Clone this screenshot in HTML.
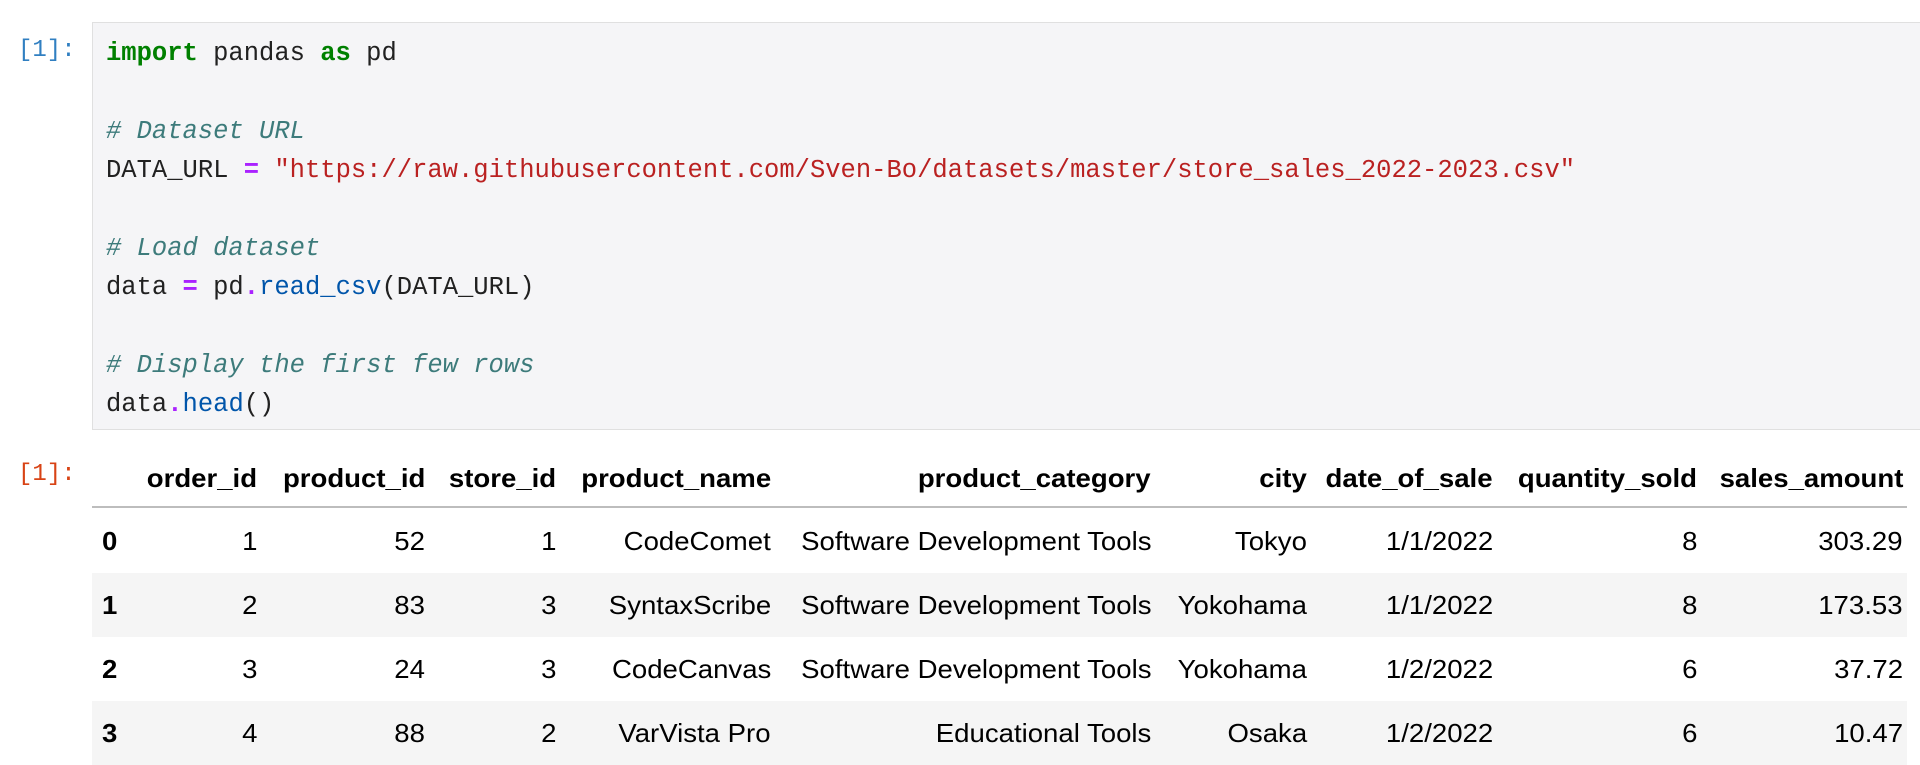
<!DOCTYPE html>
<html><head><meta charset="utf-8"><style>
body{margin:0;width:1920px;height:730px;background:#fff;overflow:hidden;position:relative;font-family:"Liberation Sans",sans-serif}
.prompt{position:absolute;font-family:"Liberation Mono",monospace;font-size:24px;}
.cell{position:absolute;left:92px;top:22px;width:1840px;height:408px;background:#f5f5f7;border:1px solid #e0e0e0;box-sizing:border-box}
.code{position:absolute;left:106px;top:34px;font-family:"Liberation Mono",monospace;font-size:25.5px;line-height:39px;white-space:pre;color:#212121;margin:0}
.k{color:#008000;font-weight:bold}.o{color:#aa22ff;font-weight:bold}.s{color:#ba2121}.c{color:#3d7b7b;font-style:italic}.f{color:#0055aa}
.row{position:absolute;left:92px;width:1815px;height:64px}
.t{position:absolute;font-size:26px;line-height:64px;white-space:nowrap;color:#000;transform:scaleX(1.06);transform-origin:right center}
.h{font-weight:bold}
.idx{transform-origin:left center}
</style></head><body>
<div class="prompt" style="left:18px;top:37px;color:#307fc1">[1]:</div>
<div class="cell"></div>
<pre class="code"><span class="k">import</span> pandas <span class="k">as</span> pd

<span class="c"># Dataset URL</span>
DATA_URL <span class="o">=</span> <span class="s">"https://raw.githubusercontent.com/Sven-Bo/datasets/master/store_sales_2022-2023.csv"</span>

<span class="c"># Load dataset</span>
data <span class="o">=</span> pd<span class="o">.</span><span class="f">read_csv</span>(DATA_URL)

<span class="c"># Display the first few rows</span>
data<span class="o">.</span><span class="f">head</span>()</pre>
<div class="prompt" style="left:18px;top:461px;color:#d84315">[1]:</div>
<div id="tbl"></div>
<script>
var rights=[257,425,556,771,1151,1307,1493,1697,1903];
var rows=[["order_id","product_id","store_id","product_name","product_category","city","date_of_sale","quantity_sold","sales_amount"],
["1","52","1","CodeComet","Software Development Tools","Tokyo","1/1/2022","8","303.29"],
["2","83","3","SyntaxScribe","Software Development Tools","Yokohama","1/1/2022","8","173.53"],
["3","24","3","CodeCanvas","Software Development Tools","Yokohama","1/2/2022","6","37.72"],
["4","88","2","VarVista Pro","Educational Tools","Osaka","1/2/2022","6","10.47"]];
var tops=[446,509,573,637,701];
var h="";
rows.forEach(function(r,i){
 var bg=(i==2||i==4)?"#f5f5f5":"transparent";
 h+='<div class="row" style="top:'+tops[i]+'px;background:'+bg+'"></div>';
 if(i>0)h+='<div class="t h idx" style="left:102px;top:'+tops[i]+'px">'+(i-1)+'</div>';
 r.forEach(function(c,j){h+='<div class="t'+(i==0?' h':'')+'" style="right:'+(1920-rights[j])+'px;top:'+tops[i]+'px">'+c+'</div>';});
});
h+='<div style="position:absolute;left:92px;top:506px;width:1815px;height:2px;background:#bdbdbd"></div>';
document.getElementById("tbl").innerHTML=h;
</script>
</body></html>
